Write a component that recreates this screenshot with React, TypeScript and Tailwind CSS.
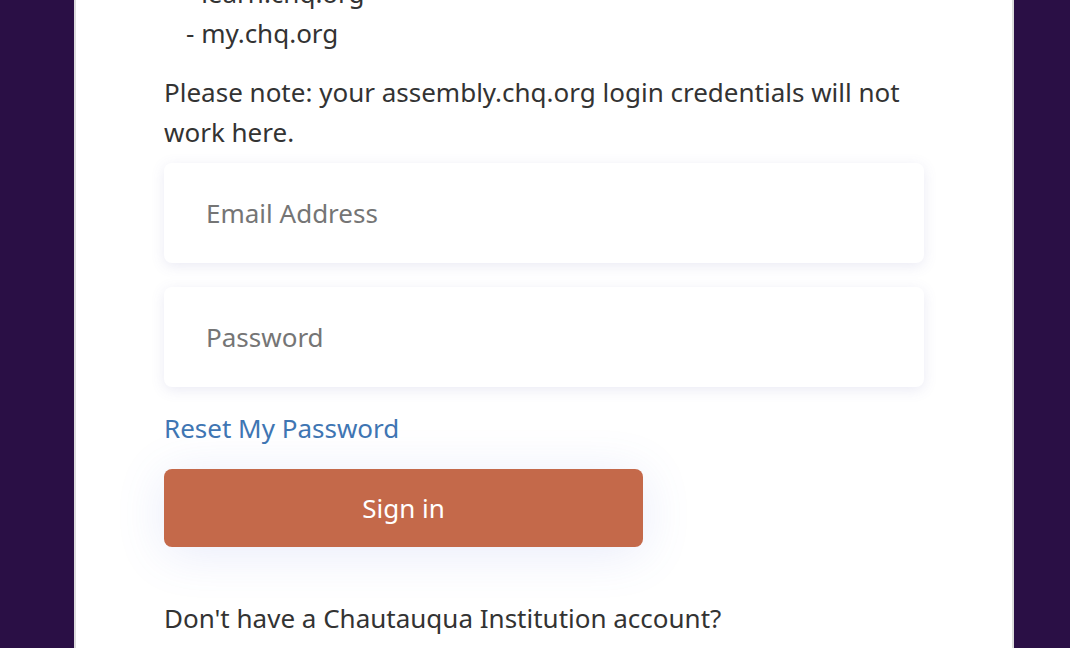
export default function App() {
  return (
    <div
      className="h-[648px] w-full overflow-hidden bg-[#2a0f45]"
      style={{ fontFamily: '"Noto Sans", "Open Sans", sans-serif' }}
    >
      <div className="ml-[74px] flex h-full w-[940px] flex-col border-x-2 border-[#dcdcdc] bg-white">
        <div className="-mt-[27px] pl-[88px] pr-[88px] text-[26px] leading-[40px] text-[#333333]">
          <ul className="pl-[22px]">
            <li>- learn.chq.org</li>
            <li>- my.chq.org</li>
          </ul>
          <p className="mt-[19px]">
            Please note: your assembly.chq.org login credentials will not work here.
          </p>
          <form className="mt-[11px] flex flex-col">
            <input
              type="email"
              placeholder="Email Address"
              className="h-[100px] w-[760px] rounded-lg bg-white px-[42px] text-[26px] text-[#333] shadow-[0_3px_14px_rgba(90,90,170,0.13)] outline-none placeholder:text-[#757575]"
            />
            <input
              type="password"
              placeholder="Password"
              className="mt-[24px] h-[100px] w-[760px] rounded-lg bg-white px-[42px] text-[26px] text-[#333] shadow-[0_3px_14px_rgba(90,90,170,0.13)] outline-none placeholder:text-[#757575]"
            />
            <a href="#" className="mt-[21px] w-fit text-[#3f76b3]">
              Reset My Password
            </a>
            <button
              type="button"
              className="mt-[21px] h-[78px] w-[479px] rounded-lg bg-[#c4694a] text-[26px] text-white shadow-[0_6px_50px_rgba(90,110,220,0.14)]"
            >
              Sign in
            </button>
          </form>
          <p className="mt-[51px]">Don't have a Chautauqua Institution account?</p>
          <a href="#" className="mt-[2px] block pl-[39px] text-[#3f76b3]">
            Sign up
          </a>
        </div>
      </div>
    </div>
  );
}
